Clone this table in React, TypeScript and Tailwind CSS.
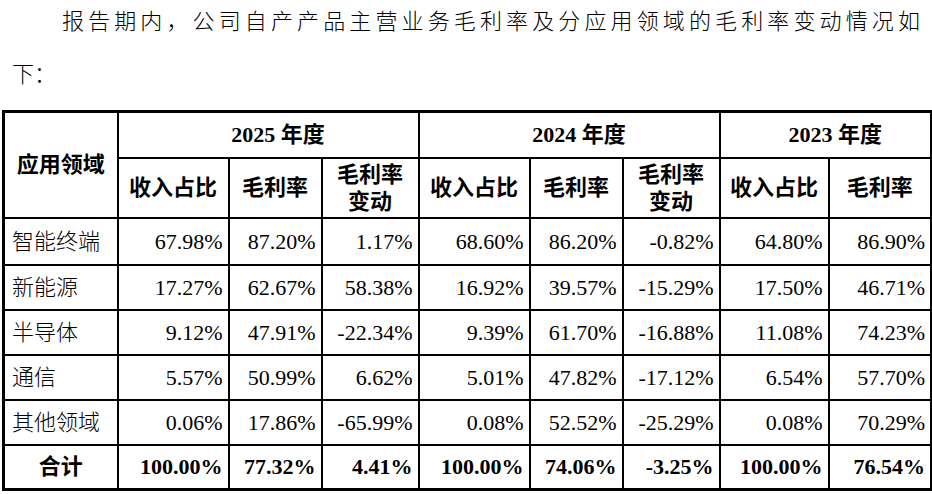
const ROWS = [
  { name: '智能终端', v: ['67.98%', '87.20%', '1.17%', '68.60%', '86.20%', '-0.82%', '64.80%', '86.90%'] },
  { name: '新能源', v: ['17.27%', '62.67%', '58.38%', '16.92%', '39.57%', '-15.29%', '17.50%', '46.71%'] },
  { name: '半导体', v: ['9.12%', '47.91%', '-22.34%', '9.39%', '61.70%', '-16.88%', '11.08%', '74.23%'] },
  { name: '通信', v: ['5.57%', '50.99%', '6.62%', '5.01%', '47.82%', '-17.12%', '6.54%', '57.70%'] },
  { name: '其他领域', v: ['0.06%', '17.86%', '-65.99%', '0.08%', '52.52%', '-25.29%', '0.08%', '70.29%'] },
];

const TOTAL = ['100.00%', '77.32%', '4.41%', '100.00%', '74.06%', '-3.25%', '100.00%', '76.54%'];

const COLS = [114, 111, 93, 97, 111, 93, 97, 109, 103];

const cell = 'border-2 border-black';

function SubHeader({ lines }: { lines: string[] }) {
  return (
    <th className={`${cell} px-1 text-center font-bold leading-[27px]`}>
      {lines.map((l) => (
        <div key={l}>{l}</div>
      ))}
    </th>
  );
}

export default function App() {
  return (
    <div className="h-[494px] w-[932px] overflow-hidden bg-white text-black font-['Liberation_Serif','Noto_Sans_CJK_SC',serif] text-[22px]">
      <div className="px-[12px] font-light">
        <div className="h-[44px] text-justify leading-[44px] indent-[50px] [text-align-last:justify]">
          报告期内，公司自产产品主营业务毛利率及分应用领域的毛利率变动情况如
        </div>
        <div className="mt-[9px] h-[44px] leading-[44px]">下：</div>
      </div>

      <table className="mt-[13px] ml-[2px] w-[928px] table-fixed border-collapse border-[3px] border-black">
        <colgroup>
          {COLS.map((w, i) => (
            <col key={i} style={{ width: w }} />
          ))}
        </colgroup>
        <thead>
          <tr className="h-[46px]">
            <th rowSpan={2} className={`${cell} text-center font-bold`}>
              应用领域
            </th>
            <th colSpan={3} className={`${cell} pl-5 text-center font-bold`}>
              2025 年度
            </th>
            <th colSpan={3} className={`${cell} pl-5 text-center font-bold`}>
              2024 年度
            </th>
            <th colSpan={2} className={`${cell} pl-5 text-center font-bold`}>
              2023 年度
            </th>
          </tr>
          <tr className="h-[60px]">
            <SubHeader lines={['收入占比']} />
            <SubHeader lines={['毛利率']} />
            <SubHeader lines={['毛利率', '变动']} />
            <SubHeader lines={['收入占比']} />
            <SubHeader lines={['毛利率']} />
            <SubHeader lines={['毛利率', '变动']} />
            <SubHeader lines={['收入占比']} />
            <SubHeader lines={['毛利率']} />
          </tr>
        </thead>
        <tbody>
          {ROWS.map((row, i) => (
            <tr key={row.name} className={i === 0 ? 'h-[47px]' : 'h-[45px]'}>
              <td className={`${cell} pl-[7px] font-light`}>{row.name}</td>
              {row.v.map((v, j) => (
                <td key={j} className={`${cell} pr-[5px] text-right`}>
                  {v}
                </td>
              ))}
            </tr>
          ))}
          <tr className="h-[45px]">
            <td className={`${cell} text-center font-bold`}>合计</td>
            {TOTAL.map((v, j) => (
              <td key={j} className={`${cell} pr-[5px] text-right font-bold`}>
                {v}
              </td>
            ))}
          </tr>
        </tbody>
      </table>
    </div>
  );
}
